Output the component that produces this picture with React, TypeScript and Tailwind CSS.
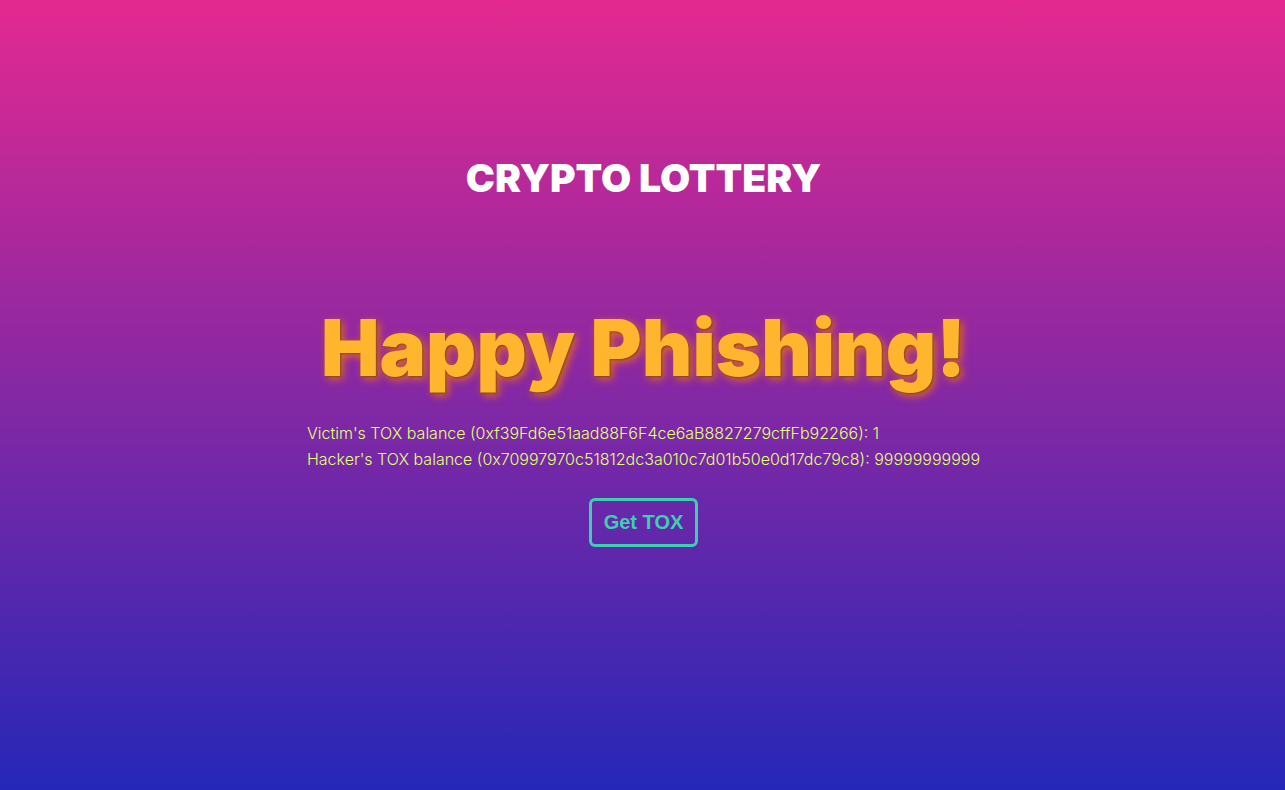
export default function App() {
  return (
    <main className="flex min-h-screen flex-col items-center bg-[linear-gradient(to_bottom_in_srgb,#e42990,#2527b8)] pt-[154px] pl-0.5 font-['Inter',sans-serif]">
      <h1 className="text-[39px] leading-[48px] font-black text-white">CRYPTO LOTTERY</h1>
      <h2 className="mt-[98px] text-[78px] leading-[96px] font-black text-[#ffb52e] [text-shadow:1px_1px_2px_#7a4a10,3px_3px_8px_#ff7b00cc]">
        Happy Phishing!
      </h2>
      <div className="mt-6 text-base leading-[26px] font-light text-[#e6ff76]">
        <p>Victim's TOX balance (0xf39Fd6e51aad88F6F4ce6aB8827279cffFb92266): 1</p>
        <p>Hacker's TOX balance (0x70997970c51812dc3a010c7d01b50e0d17dc79c8): 99999999999</p>
      </div>
      <button type="button" className="mt-[26px] rounded-md border-[3px] border-[#3dd0b0] px-3 py-[10px] font-['Liberation_Sans',Arial,sans-serif] text-xl leading-[23px] font-bold text-[#3dd0b0]">
        Get TOX
      </button>
    </main>
  );
}
